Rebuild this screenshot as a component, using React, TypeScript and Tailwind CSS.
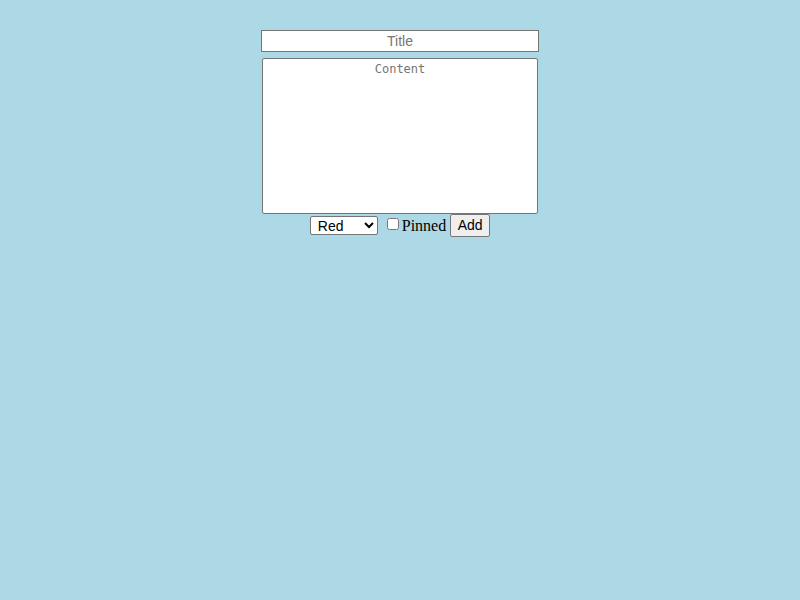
import React, { useState } from 'react';

export default function App() {
  const [title, setTitle] = useState('');
  const [content, setContent] = useState('');
  const [color, setColor] = useState('Red');
  const [pinned, setPinned] = useState(false);

  return (
    <div className="min-h-screen w-full bg-[#add8e6] flex flex-col items-center pt-[30px] font-['Liberation_Serif',serif] text-black">
      <input
        type="text"
        placeholder="Title"
        value={title}
        onChange={e => setTitle(e.target.value)}
        className="w-[278px] h-[22px] bg-white border border-[#767676] px-[2px] text-center text-[14px] font-['Liberation_Sans',Arial,sans-serif] placeholder:text-[#757575] outline-none"
      />
      <textarea
        placeholder="Content"
        value={content}
        onChange={e => setContent(e.target.value)}
        className="mt-[6px] w-[276px] h-[156px] bg-white border border-[#767676] rounded-[2px] pt-[3px] px-[2px] text-center text-[12px] leading-[15px] font-['DejaVu_Sans_Mono',monospace] placeholder:text-[#757575] resize-none outline-none"
      />
      <div className="flex items-center h-[23px]">
        <select
          value={color}
          onChange={e => setColor(e.target.value)}
          className="w-[68px] h-[19px] bg-white border border-[#767676] rounded-[2px] pl-[3px] text-[14px] font-['Liberation_Sans',Arial,sans-serif] text-black outline-none"
        >
          <option>Red</option>
          <option>Green</option>
          <option>Blue</option>
          <option>Yellow</option>
        </select>
        <input
          type="checkbox"
          checked={pinned}
          onChange={e => setPinned(e.target.checked)}
          className="ml-[9px] mr-[3px] w-[12px] h-[12px] -mt-[3px]"
        />
        <span className="text-[16px] leading-none">Pinned</span>
        <button className="ml-[4px] h-[23px] w-[40px] bg-[#efefef] border border-[#767676] rounded-[2px] text-[14px] font-['Liberation_Sans',Arial,sans-serif] text-black">
          Add
        </button>
      </div>
    </div>
  );
}
